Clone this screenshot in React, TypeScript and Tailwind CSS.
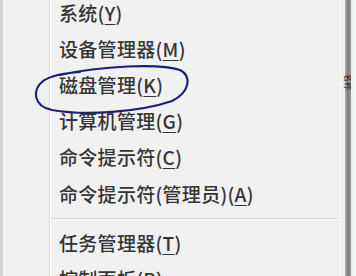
import React from "react";

type Item = { label: string; key: string; tail?: string };

const rowsA: Item[] = [
  { label: "系统(", key: "Y", tail: ")" },
  { label: "设备管理器(", key: "M", tail: ")" },
  { label: "磁盘管理(", key: "K", tail: ")" },
  { label: "计算机管理(", key: "G", tail: ")" },
  { label: "命令提示符(", key: "C", tail: ")" },
  { label: "命令提示符(管理员)(", key: "A", tail: ")" },
];
const rowsB: Item[] = [
  { label: "任务管理器(", key: "T", tail: ")" },
  { label: "控制面板(", key: "P", tail: ")" },
];

function Row({ it }: { it: Item }) {
  return (
    <div className="shrink-0 h-[36.2px] flex items-center pl-[8px] text-[19px] leading-none font-medium text-[#353535] tracking-[0.3px]">
      <span>
        {it.label}
        <span className="underline underline-offset-[3px] decoration-[1px]">{it.key}</span>
        {it.tail}
      </span>
    </div>
  );
}

export default function App() {
  return (
    <div
      className="relative w-[356px] h-[276px] overflow-hidden bg-[#f1f1f1] flex"
      style={{ fontFamily: '"Noto Sans CJK SC", "Noto Sans", sans-serif' }}
    >
      {/* left edge */}
      <div className="w-[3px] bg-[#d4d4d4]" />
      <div className="w-[1px] bg-[#fbfbfb]" />
      {/* gutter */}
      <div className="w-[45px] bg-[#f0f0f0]" />
      <div className="w-[1px] bg-[#dedede]" />
      <div className="w-[1px] bg-[#fcfcfc]" />
      {/* menu content */}
      <div className="w-[289px] flex flex-col mt-[-6px]">
        {rowsA.map((it) => (
          <Row key={it.key} it={it} />
        ))}
        <div className="shrink-0 mt-[7px] mr-[2px] h-[1px] bg-[#d6d6d6]" />
        <div className="shrink-0 mr-[2px] h-[1px] bg-[#fbfbfb] mb-[4px]" />
        {rowsB.map((it) => (
          <Row key={it.key} it={it} />
        ))}
      </div>
      {/* right border */}
      <div className="w-[1px] bg-[#f8f8f8]" />
      <div className="w-[4px] bg-[#efefef]" />
      <div className="w-[6px] bg-gradient-to-r from-[#b4b4b4] via-[#7a7a7a] to-[#a0a0a0] flex justify-center">
        <div className="mt-[74px] h-[24px] text-[8px] leading-none text-[#111] [writing-mode:vertical-rl] [text-orientation:sideways]">
          名称
        </div>
      </div>
      <div className="flex-1 bg-gradient-to-r from-[#e6eef0] to-[#f7fbfb]" />

      {/* hand-drawn ellipse */}
      <svg className="absolute left-0 top-0" width="356" height="276" viewBox="0 0 356 276">
        <path
          d="M 60 75 C 100 66, 160 63, 180 70 C 192 76, 190 92, 172 101 C 140 112, 85 116, 52 110 C 33 106, 32 90, 43 81 C 52 75, 64 73, 80 72"
          fill="none"
          stroke="#1c1f7a"
          strokeWidth="2.2"
          strokeLinecap="round"
        />
      </svg>
    </div>
  );
}
